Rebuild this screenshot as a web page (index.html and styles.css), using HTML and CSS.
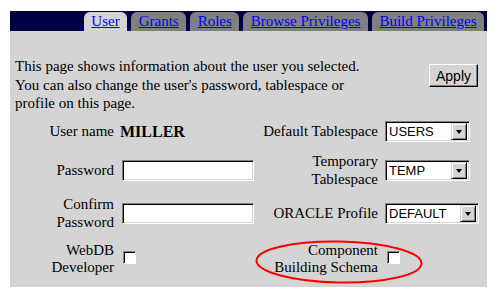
FILE: index.html
```html
<!DOCTYPE html>
<html lang="en">
<head>
    <meta charset="UTF-8">
    <title>User</title>
    <link rel="stylesheet" href="styles.css">
</head>
<body>
    <!-- Barra de pestañas -->
    <div class="tab-bar">
        <a class="tab active" href="#">User</a>
        <a class="tab" href="#">Grants</a>
        <a class="tab" href="#">Roles</a>
        <a class="tab" href="#">Browse Privileges</a>
        <a class="tab" href="#">Build Privileges</a>
    </div>

    <!-- Panel principal -->
    <div class="panel">
        <div class="intro">
            <p>This page shows information about the user you selected.<br>
            You can also change the user's password, tablespace or<br>
            profile on this page.</p>
            <button class="apply-btn">Apply</button>
        </div>

        <div class="form-grid">
            <label class="lbl">User name</label>
            <span class="value">MILLER</span>
            <label class="lbl">Default Tablespace</label>
            <div class="select-box"><span>USERS</span><i class="arrow"></i></div>

            <label class="lbl">Password</label>
            <input type="password" class="text-input">
            <label class="lbl">Temporary<br>Tablespace</label>
            <div class="select-box"><span>TEMP</span><i class="arrow"></i></div>

            <label class="lbl">Confirm<br>Password</label>
            <input type="password" class="text-input">
            <label class="lbl">ORACLE Profile</label>
            <div class="select-box wide"><span>DEFAULT</span><i class="arrow"></i></div>

            <label class="lbl low">WebDB<br>Developer</label>
            <span class="check"></span>
            <label class="lbl low">Component<br>Building Schema</label>
            <span class="check"></span>
        </div>

        <!-- Marca roja alrededor de "Component Building Schema" -->
        <svg class="highlight" width="170" height="46" viewBox="0 0 170 46">
            <ellipse cx="84" cy="23" rx="82.5" ry="20.5" fill="none" stroke="#ff0000" stroke-width="2" transform="rotate(1 84 23)"/>
        </svg>
    </div>
</body>
</html>
```

FILE: styles.css
```css
/* Estilos generales */
body {
    margin: 11px 11px 10px 10px;
    font-family: "Liberation Serif", "Times New Roman", serif;
    font-size: 15px;
    color: #000;
    background-color: #fff;
}

/* Barra de pestañas */
.tab-bar {
    display: flex;
    justify-content: flex-end;
    align-items: flex-end;
    gap: 4px;
    height: 20px;
    padding-right: 3px;
    background-color: #000042;
}

.tab {
    height: 19px;
    line-height: 19px;
    padding: 0 7.5px;
    background-color: #808080;
    border-radius: 6px 6px 0 0;
    color: #0000ff;
    text-decoration: underline;
}

.tab.active {
    background-color: #d4d4d4;
}

/* Panel principal */
.panel {
    position: relative;
    height: 256px;
    background-color: #d4d4d4;
}

.intro {
    display: flex;
    justify-content: space-between;
    align-items: flex-start;
    padding: 26px 9px 0 5px;
}

.intro p {
    margin: 0;
    line-height: 18.5px;
}

.apply-btn {
    box-sizing: border-box;
    width: 49px;
    height: 23px;
    padding: 0;
    margin-top: 7px;
    font-family: "Liberation Sans", Arial, sans-serif;
    font-size: 14px;
    color: #000;
    background-color: #d4d4d4;
    border: 1px solid;
    border-color: #fff #000 #000 #fff;
    box-shadow: inset -1px -1px 0 #808080;
}

/* Formulario */
.form-grid {
    display: grid;
    grid-template-columns: 104px 134px 116px auto;
    grid-template-rows: 34px 43px 43px 45px;
    column-gap: 7px;
    align-items: center;
    margin-top: 2px;
}

.lbl {
    text-align: right;
    line-height: 18.5px;
}

.lbl.low {
    margin-top: 4px;
    line-height: 17.5px;
}

.value {
    margin-left: -1px;
    font-size: 16px;
    font-weight: bold;
}

.text-input {
    box-sizing: border-box;
    width: 132px;
    height: 21px;
    margin: 0 0 0 1px;
    border: 1px solid;
    border-color: #808080 #fff #fff #808080;
    box-shadow: inset 1px 1px 0 #000, inset -1px -1px 0 #d4d4d4;
    background-color: #fff;
}

.select-box {
    box-sizing: border-box;
    display: flex;
    align-items: center;
    justify-content: space-between;
    width: 85px;
    height: 21px;
    padding: 0 2px 0 3px;
    border: 1px solid;
    border-color: #808080 #fff #fff #808080;
    box-shadow: inset 1px 1px 0 #000, inset -1px -1px 0 #d4d4d4;
    background-color: #fff;
    font-family: "Liberation Sans", Arial, sans-serif;
    font-size: 13px;
}

.select-box.wide {
    width: 94px;
}

.arrow {
    position: relative;
    box-sizing: border-box;
    width: 16px;
    height: 17px;
    background-color: #d4d4d4;
    border: 1px solid;
    border-color: #d4d4d4 #000 #000 #d4d4d4;
    box-shadow: inset 1px 1px 0 #fff, inset -1px -1px 0 #808080;
}

.arrow::after {
    content: "";
    position: absolute;
    left: 3.5px;
    top: 6px;
    border-left: 3.5px solid transparent;
    border-right: 3.5px solid transparent;
    border-top: 4px solid #000;
}

.check {
    box-sizing: border-box;
    width: 13px;
    height: 13px;
    margin-left: 2px;
    border: 1px solid;
    border-color: #808080 #fff #fff #808080;
    box-shadow: inset 1px 1px 0 #000;
    background-color: #fff;
}

/* Marca roja */
.highlight {
    position: absolute;
    left: 245px;
    top: 208px;
}
```
